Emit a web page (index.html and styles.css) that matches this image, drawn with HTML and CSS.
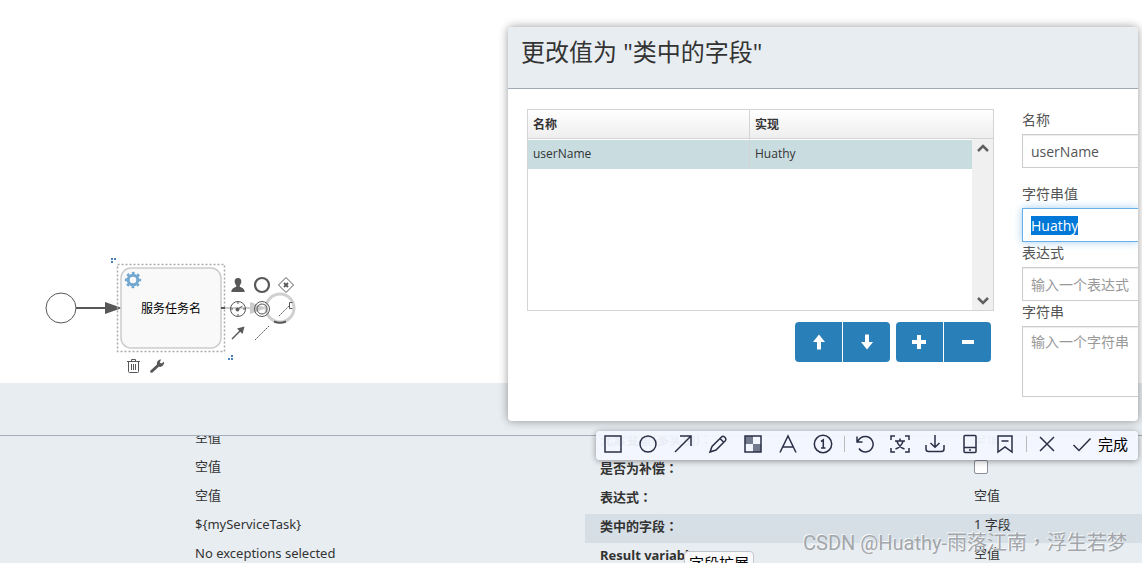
FILE: index.html
```html
<!DOCTYPE html>
<html lang="zh-CN">
<head>
<meta charset="utf-8">
<title>流程设计器</title>
<link rel="stylesheet" href="styles.css">
</head>
<body>
<main class="app">
  <section class="canvas" aria-label="流程画布">
    <svg class="diagram" width="320" height="383" viewBox="0 0 320 383">
      <circle cx="61" cy="308" r="15" fill="#fff" stroke="#585858"/>
      <path d="M76 308H108" stroke="#585858" stroke-width="2"/>
      <path d="M105 302L122 308L105 314Z" fill="#585858"/>
      <rect x="117.500" y="264.500" width="107" height="87" fill="none" stroke="#aaa" stroke-width="1.500" stroke-dasharray="2 2"/>
      <rect x="121" y="268" width="100" height="80" rx="10" fill="#f9f9f9" stroke="#ccc" stroke-width="1.500"/>
      <g fill="none" stroke="#72a7d0">
        <circle cx="133" cy="280" r="4.800" stroke-width="3"/>
        <circle cx="133" cy="280" r="7" stroke-width="2.400" stroke-dasharray="2.750 2.750" stroke-dashoffset="1.370"/>
      </g>
      <text class="task-name" x="171" y="313" text-anchor="middle">服务任务名</text>
      <path d="M221 308H225" stroke="#585858" stroke-width="2"/>
      <path d="M225 308H252" stroke="#ccc" stroke-width="2"/>
      <path d="M250 302L267 308L250 314Z" fill="#ccc"/>
      <circle cx="280" cy="308" r="14" fill="none" stroke="#d0d0d0" stroke-width="3"/>
      <path d="M274 321.500Q280 324 286 321.500" fill="none" stroke="#585858" stroke-width="2"/>
      <path d="M111 258h2v2h-2zM114 258h2v2h-2zM111 261h2v2h-2zM231 355h2v2h-2zM231 358h2v2h-2zM228 358h2v2h-2z" fill="#4a80bd"/>
    </svg>
    <div class="pad pad-add">
      <button aria-label="用户任务"><svg viewBox="0 0 24 24"><path d="M12 5c-2.600 0-3.600 1.800-3.300 4 .2 1.600.9 2.500 1.500 3.200v1.600c-1.200.9-4.600 1-4.900 5.200h13.400c-.3-4.200-3.700-4.300-4.900-5.200v-1.600c.6-.7 1.300-1.600 1.500-3.200.3-2.200-.7-4-3.300-4z" fill="#585858"/></svg></button>
      <button aria-label="结束事件"><svg viewBox="0 0 24 24"><circle cx="12" cy="12" r="7" fill="none" stroke="#585858" stroke-width="2.200"/></svg></button>
      <button aria-label="网关"><svg viewBox="0 0 24 24" fill="none" stroke="#585858"><path d="M12 4.500L19.500 12L12 19.500L4.500 12Z"/><path d="M10 10l4 4M14 10l-4 4" stroke-width="1.800"/></svg></button>
      <button aria-label="定时事件"><svg viewBox="0 0 24 24" fill="none" stroke="#585858"><circle cx="12" cy="12" r="7.500"/><path d="M12 5v2M12 17v2M5 12h2M17 12h2M11 12.500L16.500 9"/><circle cx="11.500" cy="12.500" r="1.500" fill="#585858"/></svg></button>
      <button aria-label="中间事件"><svg viewBox="0 0 24 24" fill="none" stroke="#585858"><circle cx="12" cy="12" r="7.500"/><circle cx="12" cy="12" r="5"/></svg></button>
      <button aria-label="文本注释"><svg viewBox="0 0 24 24" fill="none" stroke="#585858"><path d="M5 19L15.500 8.500" stroke-dasharray="2 1"/><path d="M18.500 5.500H15.500V11.500H18.500"/></svg></button>
      <button aria-label="顺序流"><svg viewBox="0 0 24 24"><path d="M6 18L15 9" stroke="#585858" stroke-width="1.500"/><path d="M18.500 5.500L16.500 13L11 7.500Z" fill="#585858"/></svg></button>
      <button aria-label="关联"><svg viewBox="0 0 24 24"><path d="M5 19L19 5" stroke="#585858" stroke-dasharray="2 1"/></svg></button>
    </div>
    <div class="pad pad-edit">
      <button aria-label="删除"><svg viewBox="0 0 24 24" fill="none" stroke="#585858"><path d="M6 7.500h13M10.500 7V5.500h4V7M7.500 8v9.500q0 1 1 1h8q1 0 1-1V8M10.500 10v6M12.500 10v6M14.500 10v6"/></svg></button>
      <button aria-label="更改类型"><svg viewBox="0 0 24 24"><path d="M5.500 16.500L12 10.500C11.500 8 13 5.500 16 5.500L14.800 8.500L16.300 9.500L19 7.800C19.500 11 17 13.500 13.800 12.800L7.500 18.500C5.500 19.300 4.500 17.700 5.500 16.500Z" fill="#585858"/></svg></button>
    </div>
  </section>

  <section class="properties" aria-label="属性">
    <header class="properties-head"></header>
    <div class="properties-body">
      <dl class="props props-left">
        <div><dt></dt><dd>空值</dd></div>
        <div><dt></dt><dd>空值</dd></div>
        <div><dt></dt><dd>空值</dd></div>
        <div><dt></dt><dd>${myServiceTask}</dd></div>
        <div><dt></dt><dd>No exceptions selected</dd></div>
      </dl>
      <dl class="props props-right">
        <div><dt>元素变量(多实例)<span class="mark" lang="zh-TW">：</span></dt><dd>空值</dd></div>
        <div><dt><label for="compensation">是否为补偿<span class="mark" lang="zh-TW">：</span></label></dt><dd><input class="tick" type="checkbox" id="compensation"></dd></div>
        <div><dt>表达式<span class="mark" lang="zh-TW">：</span></dt><dd>空值</dd></div>
        <div class="selected"><dt>类中的字段<span class="mark" lang="zh-TW">：</span></dt><dd>1 字段</dd></div>
        <div><dt>Result variable<span class="mark" lang="zh-TW">：</span></dt><dd>空值</dd></div>
      </dl>
    </div>
  </section>
</main>

<section class="dialog" role="dialog" aria-labelledby="dialog-title">
  <header class="dialog-head"><h2 id="dialog-title">更改值为 "类中的字段"</h2></header>
  <div class="dialog-body">
    <div class="fields">
      <div class="grid-box">
        <table class="grid">
          <thead><tr><th>名称</th><th>实现</th><th class="bar-col"></th></tr></thead>
          <tbody><tr><td>userName</td><td>Huathy</td><td class="bar-col"></td></tr></tbody>
        </table>
        <div class="scrollbar">
          <svg viewBox="0 0 12 8"><path d="M1 7L6 2L11 7" /></svg>
          <svg viewBox="0 0 12 8"><path d="M1 1L6 6L11 1" /></svg>
        </div>
      </div>
      <div class="actions">
        <div class="group">
          <button aria-label="上移"><svg viewBox="0 0 16 16"><path d="M8 0.500L14 8H10V15.500H6V8H2Z"/></svg></button>
          <button aria-label="下移"><svg viewBox="0 0 16 16"><path d="M8 15.500L2 8H6V0.500H10V8H14Z"/></svg></button>
        </div>
        <div class="group">
          <button aria-label="添加"><svg viewBox="0 0 16 16"><path d="M5 1h4v5h5v4H9v5H5v-5H0V6h5z"/></svg></button>
          <button aria-label="移除"><svg viewBox="0 0 16 16"><path d="M2 6h12v4H2z"/></svg></button>
        </div>
      </div>
    </div>
    <form class="editor">
      <div class="field spaced"><label for="f-name">名称</label><input id="f-name" type="text" value="userName"></div>
      <div class="field"><label for="f-value">字符串值</label><input id="f-value" type="text" value="Huathy" autofocus></div>
      <div class="field"><label for="f-expr">表达式</label><input id="f-expr" type="text" placeholder="输入一个表达式"></div>
      <div class="field"><label for="f-text">字符串</label><textarea id="f-text" placeholder="输入一个字符串"></textarea></div>
    </form>
  </div>
</section>

<div class="capture-bar" role="toolbar" aria-label="截图工具">
  <button aria-label="矩形"><svg viewBox="0 0 20 20"><rect x="2" y="2" width="16" height="16"/></svg></button>
  <button aria-label="椭圆"><svg viewBox="0 0 20 20"><circle cx="10" cy="10" r="8"/></svg></button>
  <button aria-label="箭头"><svg viewBox="0 0 20 20"><path d="M2 18L18 2M7 2H18V12"/></svg></button>
  <button aria-label="画笔"><svg viewBox="0 0 20 20"><path d="M2 18L4 12.500L13.500 3Q15 1.500 16.500 3L17.500 4Q18.500 5.500 17.300 6.800L8 16Z M12 4.500L15.500 8"/></svg></button>
  <button aria-label="马赛克"><svg viewBox="0 0 20 20"><path d="M2 2h8v8H2zM10 10h8v8h-8z" fill="#737b8e" stroke="none"/><rect x="2" y="2" width="16" height="16"/></svg></button>
  <button aria-label="文字"><svg viewBox="0 0 20 20"><path d="M2 18.500L10 2L18 18.500M5 13H15"/></svg></button>
  <button aria-label="序号"><svg viewBox="0 0 20 20"><circle cx="10" cy="10" r="8.700"/><path d="M8 7.500L10.300 6V14M8 14h4.500"/></svg></button>
  <span class="sep"></span>
  <button aria-label="撤销"><svg viewBox="0 0 20 20"><path d="M2 2.500V8H7.500M2.500 8C4 4.500 7 2.500 10.500 2.500A7.700 7.700 0 1 1 4 14.500"/></svg></button>
  <button aria-label="翻译"><svg viewBox="0 0 20 20"><path d="M1 6V2H5M15 2H19V6M19 14V18H15M5 18H1V14M5 7H15M10 4.500V7M13 7.500Q11 13 5.500 15M7 7.500Q9 13 14.500 15"/></svg></button>
  <button aria-label="保存"><svg viewBox="0 0 20 20"><path d="M10 1V13M5.500 9L10 13.300L14.500 9M1 11V15Q1 17.500 3.500 17.500H16.500Q19 17.500 19 15V11"/></svg></button>
  <button aria-label="发送到手机"><svg viewBox="0 0 20 20"><rect x="4" y="1.500" width="12" height="17" rx="1"/><path d="M4 13.500H16M9 16H11"/></svg></button>
  <button aria-label="收藏"><svg viewBox="0 0 20 20"><path d="M3 2H17V18L10 13L3 18ZM6.500 7H13.500"/></svg></button>
  <span class="sep"></span>
  <button aria-label="取消"><svg viewBox="0 0 20 20"><path d="M3 3L17 17M17 3L3 17"/></svg></button>
  <button class="done"><svg viewBox="0 0 20 20"><path d="M1.500 11L7 16.500L18.500 4.500"/></svg>完成</button>
</div>

<div class="tooltip" role="tooltip">字段扩展</div>
<div class="watermark">CSDN @Huathy-雨落江南<span class="mark" lang="zh-TW">，</span>浮生若梦</div>
<script src="script.js"></script>
</body>
</html>
```
FILE: styles.css
```css
* { box-sizing: border-box; }

body {
  margin: 0;
  height: 100vh;
  overflow: hidden;
  position: relative;
  background: #fff;
  color: #333;
  font: 13px/20px "Open Sans", "Noto Sans CJK SC", sans-serif;
}

button, input, textarea { font: inherit; color: inherit; }
button { border: 0; padding: 0; background: none; display: flex; align-items: center; justify-content: center; }
dl, dd, h2 { margin: 0; }

/* Full-width punctuation centred in its cell */
.mark { font-family: "Noto Sans CJK TC", sans-serif; line-height: 1; }

.app { display: flex; flex-direction: column; height: 100%; }

/* Canvas */
.canvas { position: relative; flex: 1; }
.diagram { display: block; }
.task-name { font-size: 12px; fill: #000; }
.pad { position: absolute; display: grid; grid-auto-rows: 24px; }
.pad svg { width: 24px; height: 24px; display: block; }
.pad-add { left: 226px; top: 273px; grid-template-columns: repeat(3, 24px); }
.pad-edit { left: 121px; top: 354px; grid-template-columns: repeat(2, 24px); }

/* Properties */
.properties { height: 180px; display: flex; flex-direction: column; background: #e8edf1; }
.properties-head { height: 53px; flex: none; border-bottom: 1px solid #a4aebc; }
.properties-body { flex: 1; display: flex; align-items: flex-start; overflow: hidden; }
.props { margin-top: -9px; font-family: "Noto Sans", "Noto Sans CJK SC", sans-serif; }
.props-left { width: 585px; flex: none; }
.props-right { flex: 1; }
.props > div { height: 29px; display: grid; padding-left: 15px; align-items: start; }
.props-left > div { grid-template-columns: 180px 1fr; }
.props-right > div { grid-template-columns: 374px 1fr; }
.props dt { font-weight: 700; padding-top: 2px; }
.props .selected { background: #d6dfe6; }
.tick {
  appearance: none;
  display: block;
  width: 14px;
  height: 14px;
  margin: 4px 0 0;
  border: 1px solid #8c8c9a;
  border-radius: 2px;
  background: #fff;
}

/* Dialog */
.dialog {
  position: absolute;
  top: 27px;
  right: 4px;
  width: 630px;
  overflow: hidden;
  border-radius: 4px;
  background: #fff;
  box-shadow: 0 0 10px rgba(0, 0, 0, .4);
}
.dialog-head { height: 62px; padding: 8px 13px; background: #e8edf1; border-bottom: 1px solid #9fabb6; }
.dialog-head h2 { font-size: 24px; line-height: 34px; font-weight: 400; }
.dialog-body { display: flex; gap: 28px; padding: 20px 0 24px 19px; }
.fields { width: 467px; flex: none; }
.grid-box { position: relative; height: 202px; border: 1px solid #d4d4d4; }
.grid { width: 100%; table-layout: fixed; border-collapse: separate; border-spacing: 0; }
.grid th, .grid td { height: 30px; padding: 0 5px; text-align: left; font-size: 12px; }
.grid th { height: 29px; padding-top: 2px; border-bottom: 1px solid #d4d4d4; background: linear-gradient(#fff, #eee); }
.grid tr > :first-child { width: 222px; border-right: 1px solid #d4d4d4; }
.grid td { padding-bottom: 2px; background: #c9dde1; border-top: 1px solid #fff; }
.grid .bar-col { width: 21px; }
.scrollbar {
  position: absolute;
  inset: 29px 0 0 auto;
  width: 21px;
  padding: 5px 0;
  display: flex;
  flex-direction: column;
  justify-content: space-between;
  align-items: center;
  background: #f0f0f0;
}
.scrollbar svg { width: 12px; height: 8px; fill: none; stroke: #606060; stroke-width: 2.5; }
.actions { display: flex; justify-content: flex-end; gap: 6px; padding: 11px 3px 0 0; }
.group { display: flex; gap: 1px; border-radius: 4px; overflow: hidden; }
.group button { width: 47px; height: 40px; background: #2980b9; }
.group svg { width: 16px; height: 16px; fill: #fff; }

.editor { flex: 1; min-width: 0; color: #555; font-size: 14px; }
.field { display: flex; flex-direction: column; gap: 3px; }
.field label { line-height: 22px; }
.spaced { margin-bottom: 15px; }
.field input, .field textarea {
  width: 100%;
  height: 34px;
  padding: 6px 8px;
  border: 1px solid #ccc;
  border-right: 0;
  border-radius: 0;
  outline: 0;
  background: #fff;
  box-shadow: inset 0 1px 1px rgba(0, 0, 0, .08);
}
.field textarea { height: 71px; display: block; resize: none; padding-top: 5px; }
.field input:focus { border-color: #66afe9; box-shadow: 0 0 8px rgba(102, 175, 233, .6); }
.field ::selection { background: #0078d7; color: #fff; }
.field ::placeholder { color: #999; }

/* Capture toolbar */
.capture-bar {
  position: absolute;
  top: 431px;
  right: 4px;
  height: 29px;
  display: flex;
  align-items: center;
  padding: 0 10px 3px 0;
  border-radius: 4px;
  background: rgba(243, 247, 255, .95);
  box-shadow: 0 1px 6px rgba(0, 0, 0, .4);
  color: #000;
}
.capture-bar button { width: 35px; height: 26px; }
.capture-bar svg { width: 20px; height: 20px; fill: none; stroke: #2b2f45; stroke-width: 1.5; }
.sep { width: 1px; height: 16px; margin: 0 3px; background: #bbb; }
.capture-bar .done { width: auto; gap: 6px; padding-left: 7px; font-size: 15px; }

.tooltip {
  position: absolute;
  top: 551px;
  left: 684px;
  padding: 1px 4px;
  border: 1px solid #c4c4cc;
  border-radius: 4px;
  background: #f9f9fb;
  color: #000;
  font-size: 15px;
}
.watermark {
  position: absolute;
  top: 528px;
  right: 15px;
  color: #a3a6aa;
  font: 20px/30px Roboto, "Noto Sans CJK SC", sans-serif;
  text-shadow: -1px -1px 0 rgba(255, 255, 255, .8);
  pointer-events: none;
  white-space: nowrap;
}
```
FILE: script.js
```javascript
const valueInput = document.getElementById("f-value");
valueInput.focus();
valueInput.select();
```
